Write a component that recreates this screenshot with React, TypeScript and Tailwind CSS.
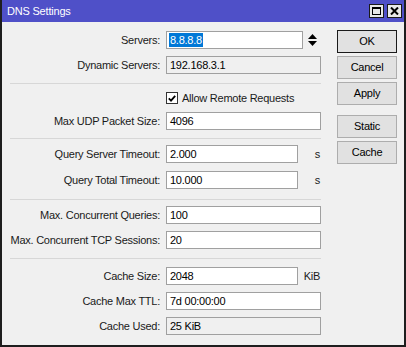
import React from "react";

const font = { fontFamily: '"Liberation Sans", Arial, sans-serif' };

function Field({
  label,
  value,
  readOnly,
  short,
  unit,
  selected,
  spinner,
  className = "",
}: {
  label: string;
  value: string;
  readOnly?: boolean;
  short?: boolean;
  unit?: string;
  selected?: boolean;
  spinner?: boolean;
  className?: string;
}) {
  return (
    <div className={`flex items-center h-[18px] ${className}`}>
      <div className="w-[151px] flex justify-end whitespace-nowrap text-[11px] tracking-[-0.25px] text-[#1a1a1a] leading-none pr-[1px]">
        {label}
      </div>
      <div className="w-[5px]" />
      <div className="flex items-center w-[155px] h-[18px]">
        <div
          className={`h-[18px] border border-[#a0a0a0] flex items-center pl-[2px] text-[11px] tracking-[-0.25px] leading-none text-black ${
            readOnly ? "bg-[#f0f0f0]" : "bg-white"
          } ${spinner ? "w-[137px]" : short ? "w-[132px]" : "w-[155px]"}`}
        >
          {selected ? (
            <span className="bg-[#0078d7] text-white px-[1px] h-[14px] flex items-center">{value}</span>
          ) : (
            <span className="pl-[1px]">{value}</span>
          )}
        </div>
        {unit && (
          <div className="flex-1 text-right text-[11px] tracking-[-0.25px] leading-none text-[#1a1a1a] pr-[1px]">
            {unit}
          </div>
        )}
        {spinner && (
          <div className="ml-[5px] flex flex-col items-center gap-[2px]">
            <svg width="9" height="5" viewBox="0 0 9 5">
              <polygon points="0,5 9,5 4.5,0" fill="#000" />
            </svg>
            <svg width="9" height="5" viewBox="0 0 9 5">
              <polygon points="0,0 9,0 4.5,5" fill="#000" />
            </svg>
          </div>
        )}
      </div>
    </div>
  );
}

function Sep({ mt, mb }: { mt: string; mb: string }) {
  return <div className={`w-[311px] h-px bg-[#d7d7d7] ${mt} ${mb}`} />;
}

function Btn({ children, primary, className = "" }: { children: React.ReactNode; primary?: boolean; className?: string }) {
  return (
    <div
      className={`w-[60px] h-[23px] flex items-center justify-center text-[11px] tracking-[-0.25px] leading-none text-black bg-[#e1e1e1] border ${
        primary ? "border-[#1a1a1a]" : "border-[#adadad]"
      } ${className}`}
    >
      {children}
    </div>
  );
}

export default function App() {
  return (
    <div
      style={font}
      className="w-[406px] h-[347px] bg-[#f0f0f0] border-l-2 border-r-2 border-b-2 border-[#1e1e1e] flex flex-col select-none"
    >
      {/* Title bar */}
      <div className="h-[22px] bg-[#4f50c8] flex items-center pl-[5px] pr-[2px] shrink-0">
        <span className="text-white text-[11px] tracking-[-0.2px] leading-none">DNS Settings</span>
        <div className="ml-auto flex gap-[3px] items-center">
          <div className="w-[15px] h-[14px] bg-[#e8e8e8] border border-[#1a1a1a] flex items-center justify-center">
            <div className="w-[9px] h-[8px] border border-black border-t-2" />
          </div>
          <div className="w-[15px] h-[14px] bg-[#e8e8e8] border border-[#1a1a1a] flex items-center justify-center">
            <svg width="9" height="8" viewBox="0 0 9 8">
              <path d="M1 0.5 L8 7.5 M8 0.5 L1 7.5" stroke="#000" strokeWidth="2" />
            </svg>
          </div>
        </div>
      </div>

      {/* Content */}
      <div className="flex flex-1">
        <div className="flex flex-col pt-[9px] pl-[8px] w-[319px]">
          <Field label="Servers:" value="8.8.8.8" selected spinner />
          <Field label="Dynamic Servers:" value="192.168.3.1" readOnly className="mt-[7px]" />
          <Sep mt="mt-[9px]" mb="mb-[7px]" />
          <div className="flex items-center h-[14px]">
            <div className="w-[156px]" />
            <div className="w-[12px] h-[12px] bg-white border border-[#333] flex items-center justify-center">
              <svg width="8" height="7" viewBox="0 0 8 7">
                <path d="M0.8 3.4 L3 5.6 L7.2 0.8" stroke="#000" strokeWidth="1.8" fill="none" />
              </svg>
            </div>
            <span className="ml-[4px] text-[11px] tracking-[-0.25px] leading-none text-[#1a1a1a]">
              Allow Remote Requests
            </span>
          </div>
          <Field label="Max UDP Packet Size:" value="4096" className="mt-[7px]" />
          <Sep mt="mt-[8px]" mb="mb-[6px]" />
          <Field label="Query Server Timeout:" value="2.000" short unit="s" />
          <Field label="Query Total Timeout:" value="10.000" short unit="s" className="mt-[8px]" />
          <Sep mt="mt-[10px]" mb="mb-[6px]" />
          <Field label="Max. Concurrent Queries:" value="100" />
          <Field label="Max. Concurrent TCP Sessions:" value="20" className="mt-[7px]" />
          <Sep mt="mt-[9px]" mb="mb-[8px]" />
          <Field label="Cache Size:" value="2048" short unit="KiB" />
          <Field label="Cache Max TTL:" value="7d 00:00:00" className="mt-[7px]" />
          <Field label="Cache Used:" value="25 KiB" readOnly className="mt-[7px]" />
        </div>
        <div className="flex flex-col ml-[16px] pt-[8px] gap-[3px]">
          <Btn primary>OK</Btn>
          <Btn>Cancel</Btn>
          <Btn>Apply</Btn>
          <Btn className="mt-[7px]">Static</Btn>
          <Btn>Cache</Btn>
        </div>
      </div>
    </div>
  );
}
